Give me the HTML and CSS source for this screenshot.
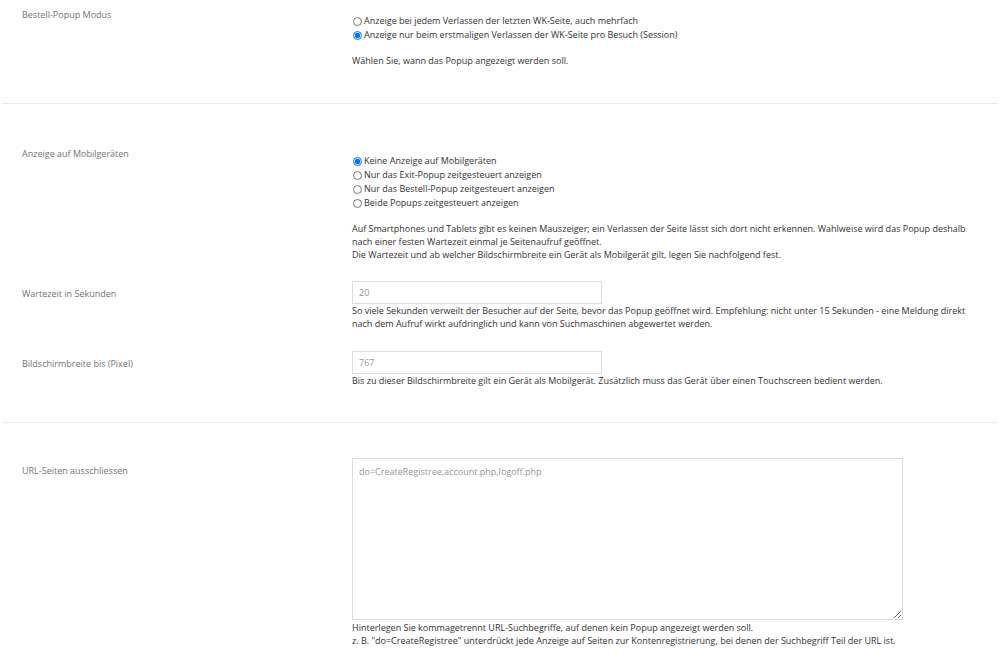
FILE: index.html
```html
<!DOCTYPE html>
<html lang="de">
<head>
<meta charset="utf-8">
<title>Popup Einstellungen</title>
<link rel="stylesheet" href="styles.css">
</head>
<body>
<div class="page">
  <section class="section first">
    <div class="row">
      <div class="label">Bestell-Popup Modus</div>
      <div class="field">
        <div class="radios">
          <label class="radio"><input type="radio" name="mode"> Anzeige bei jedem Verlassen der letzten WK-Seite, auch mehrfach</label>
          <label class="radio"><input type="radio" name="mode" checked> Anzeige nur beim erstmaligen Verlassen der WK-Seite pro Besuch (Session)</label>
        </div>
        <p class="help spaced">Wählen Sie, wann das Popup angezeigt werden soll.</p>
      </div>
    </div>
  </section>

  <section class="section middle">
    <div class="row">
      <div class="label">Anzeige auf Mobilgeräten</div>
      <div class="field">
        <div class="radios lower">
          <label class="radio"><input type="radio" name="mobile" checked> Keine Anzeige auf Mobilgeräten</label>
          <label class="radio"><input type="radio" name="mobile"> Nur das Exit-Popup zeitgesteuert anzeigen</label>
          <label class="radio"><input type="radio" name="mobile"> Nur das Bestell-Popup zeitgesteuert anzeigen</label>
          <label class="radio"><input type="radio" name="mobile"> Beide Popups zeitgesteuert anzeigen</label>
        </div>
        <p class="help spaced">Auf Smartphones und Tablets gibt es keinen Mauszeiger; ein Verlassen der Seite lässt sich dort nicht erkennen. Wahlweise wird das Popup deshalb nach einer festen Wartezeit einmal je Seitenaufruf geöffnet.<br>Die Wartezeit und ab welcher Bildschirmbreite ein Gerät als Mobilgerät gilt, legen Sie nachfolgend fest.</p>
      </div>
    </div>
    <div class="row next tight">
      <div class="label">Wartezeit in Sekunden</div>
      <div class="field">
        <input class="text-input" type="text" value="20">
        <p class="help">So viele Sekunden verweilt der Besucher auf der Seite, bevor das Popup geöffnet wird. Empfehlung: nicht unter 15 Sekunden - eine Meldung direkt nach dem Aufruf wirkt aufdringlich und kann von Suchmaschinen abgewertet werden.</p>
      </div>
    </div>
    <div class="row next">
      <div class="label">Bildschirmbreite bis (Pixel)</div>
      <div class="field">
        <input class="text-input" type="text" value="767">
        <p class="help">Bis zu dieser Bildschirmbreite gilt ein Gerät als Mobilgerät. Zusätzlich muss das Gerät über einen Touchscreen bedient werden.</p>
      </div>
    </div>
  </section>

  <section class="section last">
    <div class="row">
      <div class="label">URL-Seiten ausschliessen</div>
      <div class="field">
        <textarea class="text-area">do=CreateRegistree,account.php,logoff.php</textarea>
        <p class="help below-area">Hinterlegen Sie kommagetrennt URL-Suchbegriffe, auf denen kein Popup angezeigt werden soll.<br>z. B. "do=CreateRegistree" unterdrückt jede Anzeige auf Seiten zur Kontenregistrierung, bei denen der Suchbegriff Teil der URL ist.</p>
      </div>
    </div>
  </section>
</div>
</body>
</html>
```

FILE: styles.css
```css
html, body {
  margin: 0;
  padding: 0;
  background: #ffffff;
}

body {
  font-family: "Open Sans", "Liberation Sans", sans-serif;
  font-size: 9px;
  color: #333333;
}

.page {
  padding: 0 2px;
}

.section {
  padding: 37px 0 37px;
  border-bottom: 1px solid #ececec;
}

.section.first {
  padding-top: 2px;
  padding-bottom: 36px;
}

.section.middle {
  padding-bottom: 35px;
}

.section.last {
  padding-top: 35px;
  border-bottom: none;
}

.row {
  display: grid;
  grid-template-columns: 330px 1fr;
  padding-left: 20px;
  padding-right: 18px;
}

.row.next {
  margin-top: 21px;
}

.row.next.tight {
  margin-top: 20px;
}

.label {
  color: #757575;
  line-height: 14px;
  padding-top: 6px;
}

.field {
  min-width: 0;
}

.radios {
  display: flex;
  flex-direction: column;
  margin-top: 12px;
}

.radios.lower {
  margin-top: 13px;
}

.radio {
  display: flex;
  align-items: center;
  line-height: 14px;
  height: 14px;
  color: #333333;
}

.radio input {
  width: 9px;
  height: 9px;
  margin: 0 2px 0 1px;
  flex: none;
}

.help {
  margin: 0;
  line-height: 13px;
  color: #333333;
}

.help.spaced {
  margin-top: 12px;
}

.help.below-area {
  margin-top: 1px;
}

.text-input {
  display: block;
  box-sizing: border-box;
  width: 250px;
  height: 23px;
  margin: 0;
  padding: 0 6px;
  border: 1px solid #dddddd;
  border-radius: 0;
  font-family: inherit;
  font-size: 9px;
  color: #999999;
  background: #ffffff;
  outline: none;
}

.text-area {
  display: block;
  box-sizing: border-box;
  width: 551px;
  height: 162px;
  margin: 0;
  padding: 6px 6px;
  border: 1px solid #dddddd;
  border-radius: 0;
  font-family: inherit;
  font-size: 9px;
  line-height: 13px;
  color: #999999;
  background: #ffffff;
  resize: vertical;
  outline: none;
}
```
